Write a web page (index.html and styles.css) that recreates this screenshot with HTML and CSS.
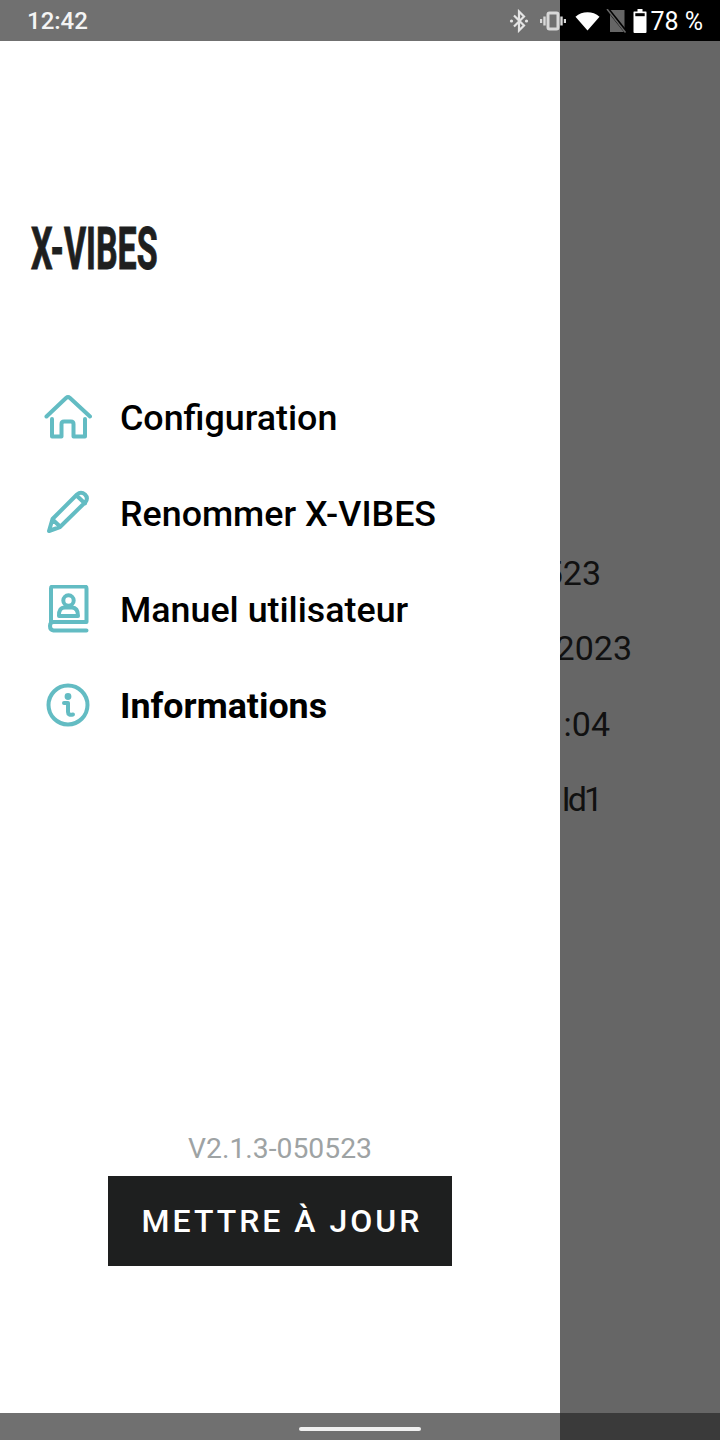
FILE: index.html
```html
<!DOCTYPE html>
<html lang="fr">
<head>
    <meta charset="UTF-8">
    <meta name="viewport" content="width=device-width, initial-scale=1.0">
    <title>X-VIBES</title>
    <link rel="stylesheet" href="styles.css">
</head>
<body>
    <div class="screen">
        <div class="status-bar">
            <span class="status-time">12:42</span>
            <div class="status-icons">
                <svg class="status-icon bt-icon" viewBox="0 0 20 24"><path d="M5 6.500 15 16.500 10 21.500V2.500L15 7.500 5 17.500" fill="none" stroke="#e4e4e4" stroke-width="2.200"/><circle cx="2.500" cy="12" r="1.600" fill="#e4e4e4"/><circle cx="17.500" cy="12" r="1.600" fill="#e4e4e4"/></svg>
                <svg class="status-icon vibrate-icon" viewBox="0 0 26 20"><rect x="8" y="2" width="10" height="16" rx="1.500" fill="none" stroke="#d8d8d8" stroke-width="3"/><path d="M4.500 5.500V14.500M1 8V12M21.500 5.500V14.500M25 8V12" stroke="#d8d8d8" stroke-width="2.400"/></svg>
                <svg class="status-icon wifi-icon" viewBox="0 0 26 20"><path d="M0.500 5.500C7.500 -0.500 18.500 -0.500 25.500 5.500L13 20Z" fill="#fff"/></svg>
                <svg class="status-icon sim-icon" viewBox="0 0 22 24"><path d="M4 1H18.500V23H4Z" fill="#666"/><path d="M2 0.500 20.500 23.500" stroke="#000" stroke-width="3.500"/><path d="M1 0 19.500 23.500" stroke="#666" stroke-width="1.500"/></svg>
                <svg class="status-icon battery-icon" viewBox="0 0 13 24"><path d="M4 0H9V2.500H12.500Q13 2.500 13 3V23Q13 24 12 24H1Q0 24 0 23V3Q0 2.500 .5 2.500H4Z" fill="#fff"/><rect x="1.800" y="4.200" width="9.400" height="3" fill="#000"/></svg>
                <span class="status-battery">78 %</span>
            </div>
        </div>

        <div class="page">
            <p class="info-row info-version">Version 050523</p>
            <p class="info-row info-date">Date 05/05/2023</p>
            <p class="info-row info-time">Heure 12 :04</p>
            <p class="info-row info-build">Nom Id1</p>
        </div>

        <div class="nav-bar"><span class="nav-handle"></span></div>

        <aside class="drawer">
            <h1 class="drawer-logo"><span>X-VIBES</span></h1>
            <ul class="menu">
                <li class="menu-item">
                    <svg class="menu-icon" viewBox="0 0 48 48"><path d="M2.500 23.500 22 5Q24 3.300 26 5L46 23.500M8 26V43.500H17.500V31Q17.500 28.500 20 28.500H27Q29.500 28.500 29.500 31V43.500H41V26"/></svg>
                    <span class="menu-label">Configuration</span>
                </li>
                <li class="menu-item">
                    <svg class="menu-icon" viewBox="0 0 48 48"><path d="M5 42 8.500 30 33 5.500Q37 2 41 5.500 44.500 9 41.500 13L16 38ZM32.500 6.500 41 14.500M8.500 30.500 16 37.500"/></svg>
                    <span class="menu-label">Renommer X-VIBES</span>
                </li>
                <li class="menu-item">
                    <svg class="menu-icon" viewBox="0 0 48 48"><path d="M7 38V3.500Q7 1.500 9 1.500H40.500Q42.500 1.500 42.500 3.500V37H9.500Q6 37 6 41T9.500 45.500H42.500"/><circle cx="24.500" cy="15.500" r="5.200"/><path d="M15 31Q14.500 22.500 21 22.500H28Q34 22.500 34 31Z"/></svg>
                    <span class="menu-label">Manuel utilisateur</span>
                </li>
                <li class="menu-item menu-item-active">
                    <svg class="menu-icon" viewBox="0 0 48 48"><circle cx="24" cy="24" r="19.500"/><path d="M20 22H24V31Q24 34.500 29 33.500"/><circle class="icon-dot" cx="24" cy="15.500" r="1.400"/></svg>
                    <span class="menu-label">Informations</span>
                </li>
            </ul>
            <div class="drawer-footer">
                <p class="version">V2.1.3-050523</p>
                <button class="update-btn">METTRE À JOUR</button>
            </div>
        </aside>
    </div>
</body>
</html>
```

FILE: styles.css
```css
* {
    box-sizing: border-box;
}
body {
    margin: 0;
    font-family: Roboto, Arial, sans-serif;
    background-color: #666;
}
.screen {
    position: relative;
    display: flex;
    flex-direction: column;
    width: 720px;
    height: 1440px;
    overflow: hidden;
}
.status-bar {
    display: flex;
    justify-content: space-between;
    align-items: center;
    height: 41px;
    padding: 0 17px 0 27px;
    color: #fff;
    background: linear-gradient(to right, #707070 560px, #000 560px);
}
.status-time {
    font-size: 24px;
    font-weight: 500;
    color: #f4f4f4;
}
.status-icons {
    display: flex;
    align-items: center;
}
.status-icon {
    display: block;
    flex: none;
}
.bt-icon {
    width: 20px;
    height: 24px;
    margin-right: 11px;
}
.vibrate-icon {
    width: 26px;
    height: 20px;
    margin-right: 9px;
}
.wifi-icon {
    width: 25px;
    height: 20px;
    margin-right: 6px;
}
.sim-icon {
    width: 22px;
    height: 24px;
    margin-right: 5px;
}
.battery-icon {
    width: 14px;
    height: 24px;
    margin-right: 3px;
}
.status-battery {
    padding-top: 1px;
    font-size: 25px;
}
.page {
    flex: 1;
    padding-top: 511px;
    background-color: #666;
}
.info-row {
    margin: 0;
    height: 75.300px;
    font-size: 34px;
    font-weight: 400;
    line-height: 42px;
    text-align: right;
    color: #111;
}
.info-version {
    padding-right: 119px;
}
.info-date {
    padding-right: 88px;
}
.info-time {
    padding-right: 110px;
}
.info-build {
    padding-right: 120px;
    letter-spacing: -3px;
}
.nav-bar {
    display: flex;
    height: 27px;
    padding: 14px 0 0 299px;
    background: linear-gradient(to right, #707070 560px, #3a3a3a 560px);
}
.nav-handle {
    width: 122px;
    height: 4px;
    border-radius: 2px;
    background-color: #f0f0f0;
}
.drawer {
    position: absolute;
    top: 41px;
    left: 0;
    display: flex;
    flex-direction: column;
    width: 560px;
    height: 1372px;
    background-color: #fff;
}
.drawer-logo {
    height: 328px;
    margin: 0;
    padding: 178px 0 0 31px;
    font-size: 60px;
    font-weight: 700;
    line-height: 60px;
    color: #1e1f1f;
    -webkit-text-stroke: 1px #1e1f1f;
}
.drawer-logo span {
    display: inline-block;
    transform: scaleX(0.565);
    transform-origin: left center;
    white-space: nowrap;
}
.menu {
    margin: 0;
    padding: 0;
    list-style: none;
}
.menu-item {
    display: flex;
    align-items: center;
    gap: 28px;
    height: 96px;
    padding-left: 44px;
    font-size: 35.800px;
    font-weight: 500;
    color: #000;
}
.menu-label {
    padding-top: 2px;
}
.menu-item-active {
    font-weight: 700;
}
.menu-icon {
    flex: none;
    width: 48px;
    height: 48px;
    fill: none;
    stroke: #63bcc3;
    stroke-width: 4;
    stroke-linecap: round;
    stroke-linejoin: round;
}
.icon-dot {
    fill: #63bcc3;
}
.drawer-footer {
    display: flex;
    flex-direction: column;
    align-items: center;
    margin-top: auto;
    padding-bottom: 147px;
}
.version {
    margin: 0 0 10px;
    font-size: 28.300px;
    line-height: 34px;
    color: #9ea3a4;
}
.update-btn {
    width: 344px;
    height: 90px;
    padding: 0 0 0 4px;
    border: none;
    font-family: inherit;
    font-size: 32px;
    font-weight: 500;
    letter-spacing: 3px;
    color: #fff;
    background-color: #1e1f1f;
}
```
